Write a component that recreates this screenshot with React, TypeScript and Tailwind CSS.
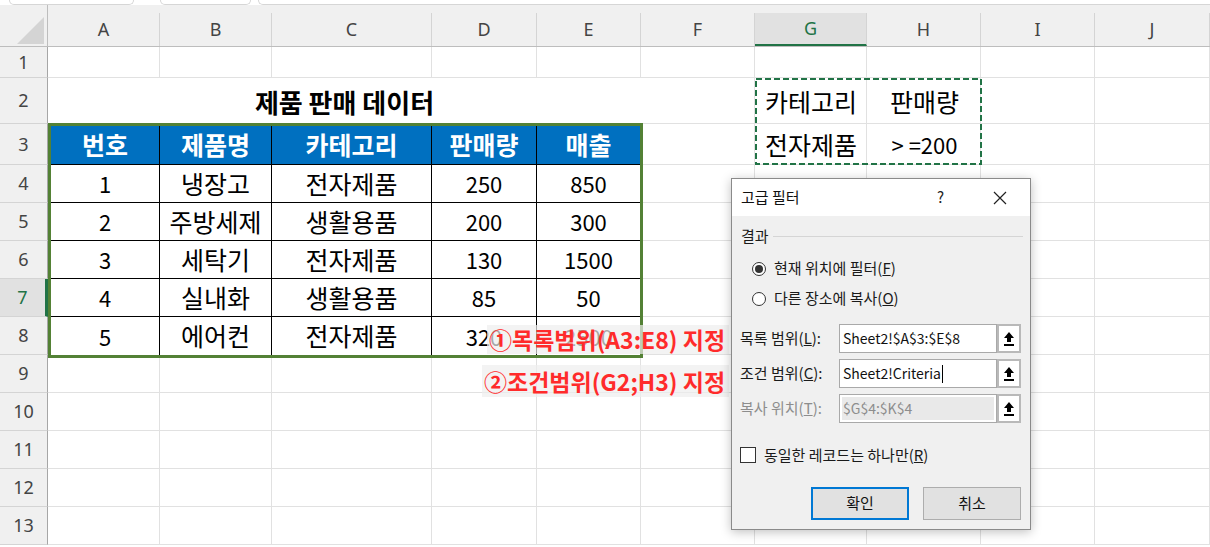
import React from "react";

const COLS = ["A", "B", "C", "D", "E", "F", "G", "H", "I", "J"];
const COL_START = [
  "col-start-1",
  "col-start-2",
  "col-start-3",
  "col-start-4",
  "col-start-5",
  "col-start-6",
  "col-start-7",
  "col-start-8",
  "col-start-9",
  "col-start-10",
  "col-start-11",
];
const ROW_START = [
  "row-start-1",
  "row-start-2",
  "row-start-3",
  "row-start-4",
  "row-start-5",
  "row-start-6",
  "row-start-7",
  "row-start-8",
  "row-start-9",
  "row-start-10",
  "row-start-11",
  "row-start-12",
  "row-start-13",
  "row-start-14",
];

const TABLE_HEAD = ["번호", "제품명", "카테고리", "판매량", "매출"];
const TABLE_ROWS = [
  ["1", "냉장고", "전자제품", "250", "850"],
  ["2", "주방세제", "생활용품", "200", "300"],
  ["3", "세탁기", "전자제품", "130", "1500"],
  ["4", "실내화", "생활용품", "85", "50"],
  ["5", "에어컨", "전자제품", "320", "2500"],
];

const SHEET_FONT = "font-['Noto_Sans_CJK_KR','Noto_Sans',sans-serif]";
const UI_FONT = "font-['Noto_Sans','Noto_Sans_CJK_KR',sans-serif]";

const isText = (i: number) => i === 1 || i === 2;

function PickButton() {
  return (
    <div className="w-[24px] h-full border-2 border-[#b9b9b9] bg-white flex items-center justify-center">
      <svg width="12" height="16" viewBox="0 0 12 16">
        <polygon points="6,1 11,7 8,7 8,11 4,11 4,7 1,7" fill="#000" />
        <rect x="1" y="13" width="10" height="2" fill="#000" />
      </svg>
    </div>
  );
}

function RangeRow({
  label,
  hot,
  value,
  disabled,
  cursor,
}: {
  label: string;
  hot: string;
  value: string;
  disabled?: boolean;
  cursor?: boolean;
}) {
  return (
    <div className="flex items-center h-[29px]">
      <div className={`w-[107px] pl-[8px] text-[15px] ${disabled ? "text-[#8d8d8d]" : "text-[#1a1a1a]"}`}>
        {label}(<u>{hot}</u>):
      </div>
      <div
        className={`w-[158px] h-full border border-[#a9a9a9] bg-white flex items-center ${
          disabled ? "p-[2px]" : "px-[3px]"
        }`}
      >
        {disabled ? (
          <div className="w-full h-full bg-[#e9e9e9] flex items-center px-[1px] text-[14px] text-[#8d8d8d]">
            {value}
          </div>
        ) : (
          <span className="text-[14px] text-[#111] flex items-center">
            {value}
            {cursor && <span className="inline-block w-px h-[18px] bg-black ml-px" />}
          </span>
        )}
      </div>
      <PickButton />
    </div>
  );
}

function Dialog() {
  return (
    <div
      className={`absolute left-[731px] top-[178px] w-[300px] h-[352px] border border-[#8a8a8a] bg-[#f0f0f0] shadow-[0_2px_10px_rgba(0,0,0,0.25)] flex flex-col ${SHEET_FONT}`}
    >
      <div className="h-[37px] bg-white flex items-center pl-[9px] pr-[23px]">
        <span className="text-[15px] text-[#111] flex-1">고급 필터</span>
        <span className="text-[15px] text-[#222] mr-[49px]">?</span>
        <svg width="14" height="14" viewBox="0 0 14 14">
          <path d="M1 1 L13 13 M13 1 L1 13" stroke="#222" strokeWidth="1.2" />
        </svg>
      </div>

      <div className="flex flex-col pt-[8px]">
        <div className="flex items-center pl-[9px] pr-[7px] h-[24px]">
          <span className="text-[15px] text-[#1a1a1a]">결과</span>
          <div className="flex-1 h-px bg-[#d5d5d5] ml-[4px]" />
        </div>

        <div className="flex flex-col pl-[20px] mt-[11px] gap-[11px]">
          <div className="flex items-center gap-[8px] h-[19px]">
            <div className="w-[14px] h-[14px] rounded-full border border-[#333] bg-white flex items-center justify-center">
              <div className="w-[8px] h-[8px] rounded-full bg-[#333]" />
            </div>
            <span className="text-[15px] text-[#1a1a1a]">
              현재 위치에 필터(<u>F</u>)
            </span>
          </div>
          <div className="flex items-center gap-[8px] h-[19px]">
            <div className="w-[14px] h-[14px] rounded-full border border-[#333] bg-white" />
            <span className="text-[15px] text-[#1a1a1a]">
              다른 장소에 복사(<u>O</u>)
            </span>
          </div>
        </div>

        <div className="flex flex-col mt-[16px] gap-[6px]">
          <RangeRow label="목록 범위" hot="L" value="Sheet2!$A$3:$E$8" />
          <RangeRow label="조건 범위" hot="C" value="Sheet2!Criteria" cursor />
          <RangeRow label="복사 위치" hot="T" value="$G$4:$K$4" disabled />
        </div>

        <div className="flex items-center gap-[8px] pl-[8px] mt-[23px] h-[18px]">
          <div className="w-[16px] h-[16px] border border-[#333] bg-white" />
          <span className="text-[15px] text-[#1a1a1a]">
            동일한 레코드는 하나만(<u>R</u>)
          </span>
        </div>

        <div className="flex justify-end gap-[14px] pr-[9px] mt-[23px]">
          <div className="w-[98px] h-[33px] border-2 border-[#0078d4] bg-[#e1e1e1] flex items-center justify-center text-[15px] text-[#111]">
            확인
          </div>
          <div className="w-[98px] h-[33px] border border-[#adadad] bg-[#e1e1e1] flex items-center justify-center text-[15px] text-[#111]">
            취소
          </div>
        </div>
      </div>
    </div>
  );
}

export default function App() {
  const bodyRows = Array.from({ length: 13 }, (_, i) => i + 1);

  return (
    <div className="relative w-[1210px] h-[547px] overflow-hidden bg-white">
      {/* sheet tabs strip at the very top */}
      <div className="flex h-[5px] bg-white">
        <div className="w-[9px]" />
        <div className="w-[125px] h-full border-x border-b border-[#d6d6d6] rounded-b-[6px]" />
        <div className="w-[26px] h-full" />
        <div className="w-[91px] h-full border-x border-b border-[#d6d6d6] rounded-b-[6px]" />
        <div className="w-[7px]" />
        <div className="flex-1 h-full border-l border-b border-[#d6d6d6] rounded-bl-[6px]" />
      </div>

      <div
        className={`grid grid-cols-[48px_112px_112px_160px_105px_104px_114px_112px_114px_114px_115px] grid-rows-[42px_31px_46px_41px_repeat(10,38px)] ${SHEET_FONT}`}
      >
        {/* corner */}
        <div className="col-start-1 row-start-1 bg-[#f0f0f0] border-r border-b border-[#bdbdbd] flex items-start justify-end pt-[12px] pr-[3px]">
          <svg width="27" height="27" viewBox="0 0 27 27">
            <polygon points="27,0 27,27 0,27" fill="#d4d4d4" />
          </svg>
        </div>

        {/* column headers */}
        {COLS.map((c, i) => (
          <div
            key={c}
            className={`${COL_START[i + 1]} row-start-1 bg-[#f0f0f0] border-b border-[#bdbdbd] pt-[8px]`}
          >
            <div
              className={`h-full border-r border-[#d4d4d4] flex items-center justify-center text-[18px] ${UI_FONT} ${
                c === "G" ? "bg-[#e1e1e1] border-b-2 border-b-[#217346] text-[#217346]" : "text-[#444]"
              }`}
            >
              {c}
            </div>
          </div>
        ))}

        {/* row headers */}
        {bodyRows.map((r) => (
          <div
            key={`rh${r}`}
            className={`${ROW_START[r]} col-start-1 border-b border-[#d4d4d4] flex items-center justify-center text-[18px] ${UI_FONT} ${
              r === 7
                ? "bg-[#e1e1e1] text-[#217346] border-r-[3px] border-r-[#217346]"
                : "bg-[#f0f0f0] text-[#444] border-r border-r-[#a6a6a6]"
            }`}
          >
            {r}
          </div>
        ))}

        {/* empty cells */}
        {bodyRows.map((r) =>
          COLS.map((c, i) => (
            <div
              key={`${c}${r}`}
              className={`${ROW_START[r]} ${COL_START[i + 1]} border-r border-b border-[#e1e1e1]`}
            />
          ))
        )}

        {/* title A2:E2 */}
        <div className="row-start-3 col-start-2 col-span-5 bg-white border-b border-[#e1e1e1] flex items-center justify-center pt-[1px] text-[26px] font-bold text-black">
          제품 판매 데이터
        </div>

        {/* data table A3:E8 */}
        <div className="row-start-4 row-span-6 col-start-2 col-span-5 -mt-px -mr-[2px] -mb-[3px] border-[3px] border-[#538135] bg-white grid grid-cols-[109px_112px_160px_105px_103px] grid-rows-[39px_repeat(5,38px)]">
          {TABLE_HEAD.map((h, i) => (
            <div
              key={h}
              className={`bg-[#0070c0] text-white text-[25px] font-bold flex items-center justify-center border-b border-black ${
                i < 4 ? "border-r" : ""
              }`}
            >
              {h}
            </div>
          ))}
          {TABLE_ROWS.map((row, ri) =>
            row.map((v, i) => (
              <div
                key={`${ri}-${i}`}
                className={`flex items-center justify-center text-black border-black ${
                  isText(i) ? "text-[25px]" : "text-[22px]"
                } ${i < 4 ? "border-r" : ""} ${ri < 4 ? "border-b" : ""}`}
              >
                {v}
              </div>
            ))
          )}
        </div>

        {/* criteria G2:H3 */}
        <div className="row-start-3 row-span-2 col-start-8 col-span-2 -mr-px relative grid grid-cols-[112px_115px] grid-rows-[46px_41px] text-[25px] text-black">
          <div className="flex items-center justify-center pt-[2px]">카테고리</div>
          <div className="flex items-center justify-center pt-[2px]">판매량</div>
          <div className="flex items-center justify-center">전자제품</div>
          <div className="flex items-center justify-center text-[22px]">&gt; =200</div>
          <svg className="absolute inset-0 w-full h-full" preserveAspectRatio="none">
            <rect
              x="1"
              y="1"
              width="225"
              height="85"
              fill="none"
              stroke="#217346"
              strokeWidth="2"
              strokeDasharray="6 3"
            />
          </svg>
        </div>
      </div>

      {/* annotations */}
      <div
        className={`absolute left-[487px] top-[325px] h-[29px] pl-[2px] pr-[4px] bg-[#eeeeee]/70 flex items-center text-[23px] font-bold text-[#ff2b2b] ${SHEET_FONT}`}
      >
        ①목록범위(A3:E8) 지정
      </div>
      <div
        className={`absolute left-[482px] top-[365px] h-[32px] pl-[2px] pr-[4px] bg-[#eeeeee]/70 flex items-center text-[23px] font-bold text-[#ff2b2b] ${SHEET_FONT}`}
      >
        ②조건범위(G2;H3) 지정
      </div>

      <Dialog />
    </div>
  );
}
